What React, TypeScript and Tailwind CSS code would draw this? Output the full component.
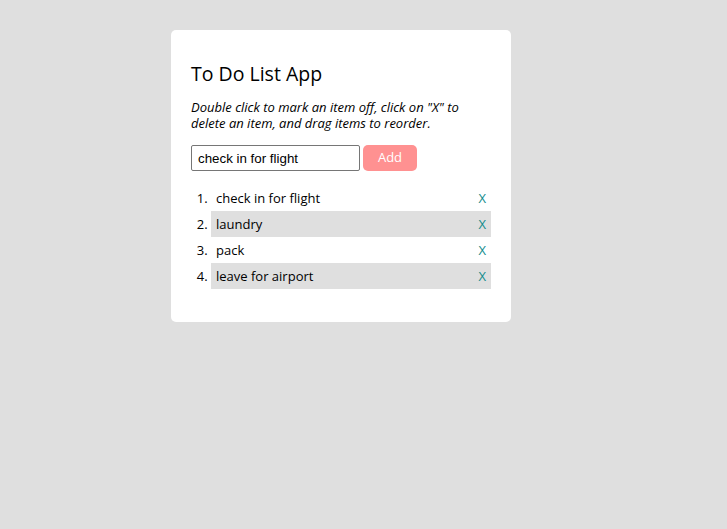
import React, { useState } from 'react';

const App: React.FC = () => {
  const [text, setText] = useState('check in for flight');
  const [items, setItems] = useState<string[]>(['check in for flight', 'laundry', 'pack', 'leave for airport']);

  return (
    <div className="min-h-screen bg-[#dfdfdf] pt-[30px] font-['Open_Sans',sans-serif] text-black">
      <div className="w-[340px] rounded-[5px] bg-white px-5 pt-[30px] pb-[33px] ml-[171px]">
        <h1 className="text-[19.5px] leading-[27px] mb-[12px]">To Do List App</h1>
        <p className="text-[13px] italic leading-[16px] mb-[14px]">
          Double click to mark an item off, click on "X" to delete an item, and drag items to reorder.
        </p>

        {/* Input row */}
        <div className="flex items-center gap-[3px] mb-[14px]">
          <input
            value={text}
            onChange={(e) => setText(e.target.value)}
            className="h-[26px] w-[169px] border border-[#767676] rounded-[2px] px-[6px] text-[13.33px] font-['Liberation_Sans',Arial,sans-serif] outline-none"
          />
          <button className="h-[26px] w-[54px] rounded-[5px] bg-[#ff9191] text-white text-[13px]">
            Add
          </button>
        </div>

        {/* Items */}
        <ol className="list-decimal pl-5 text-[13px]">
          {items.map((item, i) => (
            <li
              key={i}
              className={`h-[26px] pl-[5px] leading-[26px] ${i % 2 === 1 ? 'bg-[#dfdfdf]' : ''}`}
            >
              <div className="flex justify-between pr-[5px]">
                <span>{item}</span>
                <button
                  className="text-[#128c8c]"
                  onClick={() => setItems(items.filter((_, j) => j !== i))}
                >
                  X
                </button>
              </div>
            </li>
          ))}
        </ol>
      </div>
    </div>
  );
};

export default App;
